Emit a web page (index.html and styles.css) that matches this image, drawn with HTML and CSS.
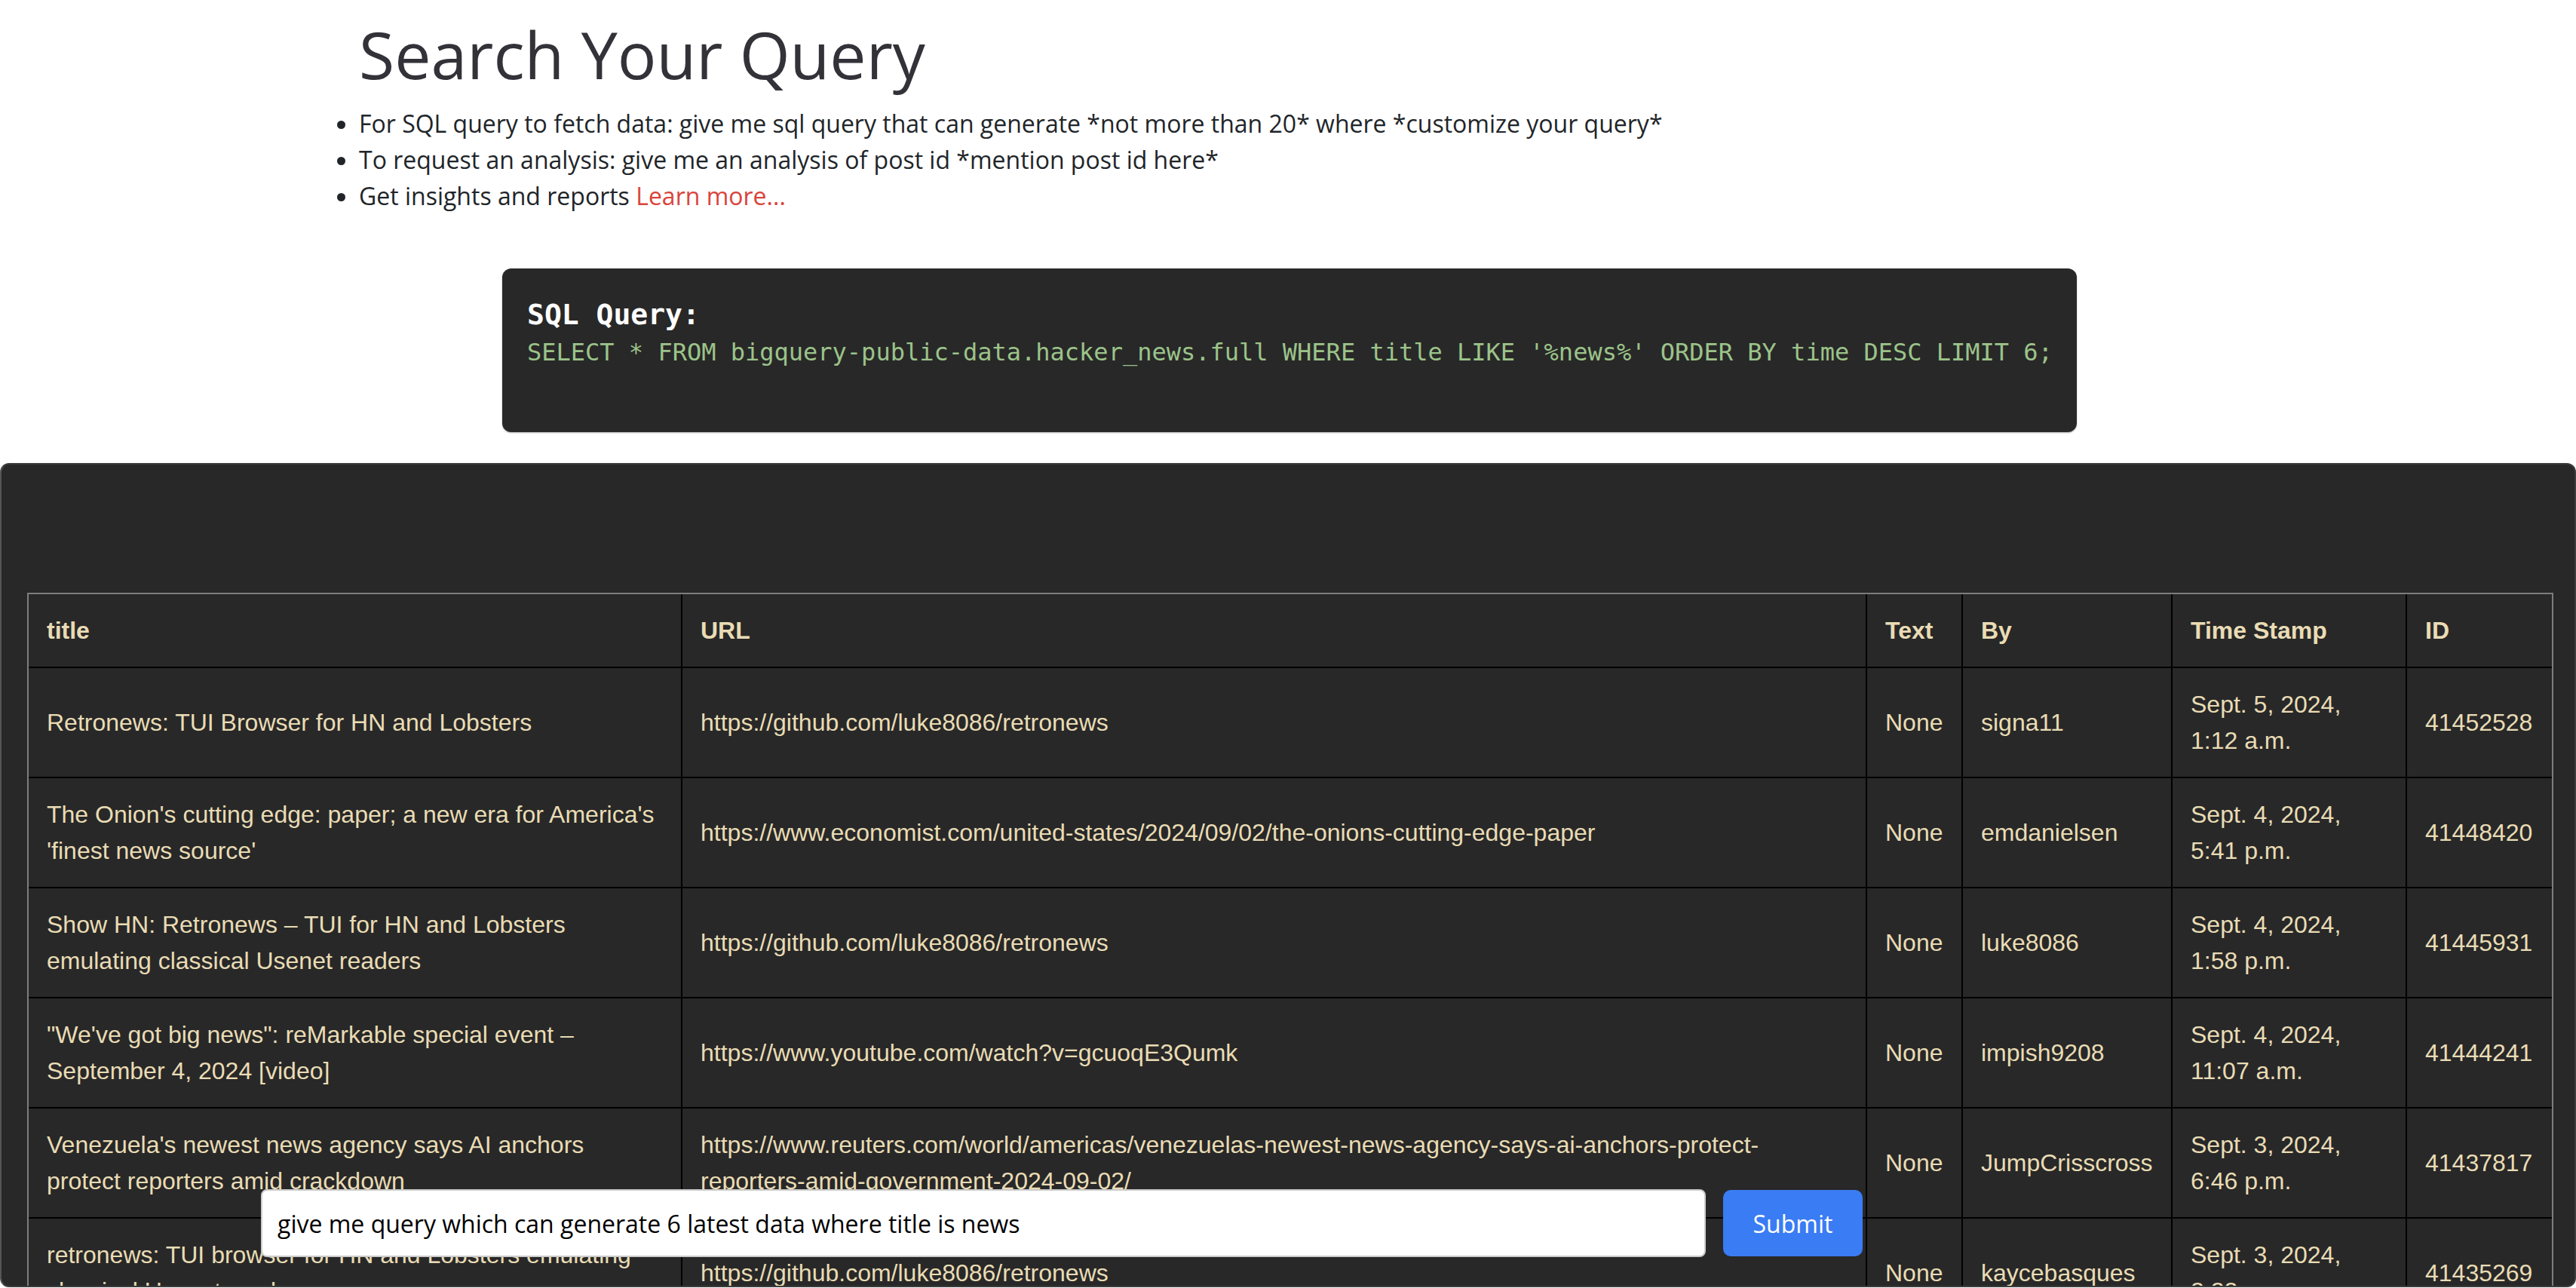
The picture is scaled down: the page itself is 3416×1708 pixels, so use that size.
FILE: index.html
```html
<!DOCTYPE html>
<html lang="en">
<head>
<meta charset="utf-8">
<title>Search Your Query</title>
<link rel="stylesheet" href="styles.css">
</head>
<body>
  <div class="intro">
    <h1 class="page-title">Search Your Query</h1>
    <ul class="hints">
      <li>For SQL query to fetch data: give me sql query that can generate *not more than 20* where *customize your query*</li>
      <li>To request an analysis: give me an analysis of post id *mention post id here*</li>
      <li>Get insights and reports <a class="learn" href="#">Learn more...</a></li>
    </ul>
  </div>

  <div class="sql-box">
    <div class="sql-label">SQL Query:</div>
    <div class="sql-code">SELECT * FROM bigquery-public-data.hacker_news.full WHERE title LIKE '%news%' ORDER BY time DESC LIMIT 6;</div>
  </div>

  <div class="results">
    <table class="grid">
      <colgroup>
        <col class="w-title">
        <col class="w-url">
        <col class="w-text">
        <col class="w-by">
        <col class="w-time">
        <col class="w-id">
      </colgroup>
      <thead>
        <tr><th>title</th><th>URL</th><th>Text</th><th>By</th><th>Time Stamp</th><th>ID</th></tr>
      </thead>
      <tbody>
        <tr>
          <td>Retronews: TUI Browser for HN and Lobsters</td>
          <td>https://github.com/luke8086/retronews</td>
          <td>None</td><td>signa11</td><td>Sept. 5, 2024, 1:12 a.m.</td><td>41452528</td>
        </tr>
        <tr>
          <td>The Onion's cutting edge: paper; a new era for America's 'finest news source'</td>
          <td>https://www.economist.com/united-states/2024/09/02/the-onions-cutting-edge-paper</td>
          <td>None</td><td>emdanielsen</td><td>Sept. 4, 2024, 5:41 p.m.</td><td>41448420</td>
        </tr>
        <tr>
          <td>Show HN: Retronews – TUI for HN and Lobsters emulating classical Usenet readers</td>
          <td>https://github.com/luke8086/retronews</td>
          <td>None</td><td>luke8086</td><td>Sept. 4, 2024, 1:58 p.m.</td><td>41445931</td>
        </tr>
        <tr>
          <td>"We've got big news": reMarkable special event – September 4, 2024 [video]</td>
          <td>https://www.youtube.com/watch?v=gcuoqE3Qumk</td>
          <td>None</td><td>impish9208</td><td>Sept. 4, 2024, 11:07 a.m.</td><td>41444241</td>
        </tr>
        <tr>
          <td>Venezuela's newest news agency says AI anchors protect reporters amid crackdown</td>
          <td>https://www.reuters.com/world/americas/venezuelas-newest-news-agency-says-ai-anchors-protect-reporters-amid-government-2024-09-02/</td>
          <td>None</td><td>JumpCrisscross</td><td>Sept. 3, 2024, 6:46 p.m.</td><td>41437817</td>
        </tr>
        <tr>
          <td>retronews: TUI browser for HN and Lobsters emulating classical Usenet readers</td>
          <td>https://github.com/luke8086/retronews</td>
          <td>None</td><td>kaycebasques</td><td>Sept. 3, 2024, 2:22 p.m.</td><td>41435269</td>
        </tr>
      </tbody>
    </table>
  </div>

  <form class="ask" onsubmit="return false">
    <input class="ask-input" type="text" value="give me query which can generate 6 latest data where title is news">
    <button class="ask-btn" type="submit">Submit</button>
  </form>
</body>
</html>
```
FILE: styles.css
```css
* { box-sizing: border-box; }

html, body {
  margin: 0;
  padding: 0;
  background: #ffffff;
  overflow: hidden;
}

body {
  font-family: "Open Sans", "Noto Sans", sans-serif;
  font-size: 32px;
  line-height: 48px;
  color: #212529;
}

.intro {
  padding-left: 476px;
}

.page-title {
  margin: 22px 0 0 0;
  font-family: "Open Sans", sans-serif;
  font-weight: 500;
  font-size: 86px;
  line-height: 100px;
  color: #333238;
}

.hints {
  margin: 18px 0 0 0;
  padding: 0;
  list-style: disc outside;
}

.hints li {
  line-height: 48px;
}

.learn {
  color: #d9443b;
  text-decoration: none;
}

.sql-box {
  width: 2088px;
  margin: 72px 0 0 666px;
  padding: 36px 33px 81px 33px;
  background: #282828;
  border-radius: 12px;
  box-shadow: 0 1px 2px rgba(0, 0, 0, 0.35);
  font-family: "DejaVu Sans Mono", "Liberation Mono", monospace;
  font-size: 32px;
  line-height: 50px;
}

.sql-label {
  color: #ffffff;
  font-weight: bold;
  font-size: 38px;
}

.sql-code {
  color: #9cc38a;
  white-space: nowrap;
}

.results {
  margin-top: 41px;
  height: 1093px;
  background: #282828;
  border: 2px solid #3c3c3c;
  border-left-color: #555555;
  border-radius: 12px;
  padding: 170px 0 0 34px;
  overflow: hidden;
}

.grid {
  width: 3350px;
  table-layout: fixed;
  border-collapse: separate;
  border-spacing: 0;
  border: 2px solid #7d7d7d;
  font-family: "Liberation Sans", Arial, sans-serif;
  font-size: 32px;
  line-height: 48px;
  color: #e9dcb5;
}

.w-title { width: 867px; }
.w-url { width: 1571px; }
.w-text { width: 127px; }
.w-by { width: 278px; }
.w-time { width: 311px; }
.w-id { width: 192px; }

.grid th,
.grid td {
  padding: 24px;
  text-align: left;
  vertical-align: middle;
  border-right: 2px solid #000000;
  border-bottom: 2px solid #000000;
  word-wrap: break-word;
}

.grid th:last-child,
.grid td:last-child {
  border-right: none;
}

.grid th {
  font-weight: bold;
}

.ask {
  position: fixed;
  left: 346px;
  bottom: 41px;
  display: flex;
  align-items: center;
  gap: 23px;
  margin: 0;
}

.ask-input {
  width: 1916px;
  height: 90px;
  padding: 0 20px;
  border: 2px solid #cccccc;
  border-radius: 8px;
  background: #ffffff;
  font-family: "Open Sans", sans-serif;
  font-size: 32px;
  color: #000000;
  outline: none;
}

.ask-btn {
  width: 185px;
  height: 88px;
  border: none;
  border-radius: 10px;
  background: #3a7cf3;
  color: #ffffff;
  font-family: "Open Sans", sans-serif;
  font-size: 32px;
  cursor: pointer;
}
```
